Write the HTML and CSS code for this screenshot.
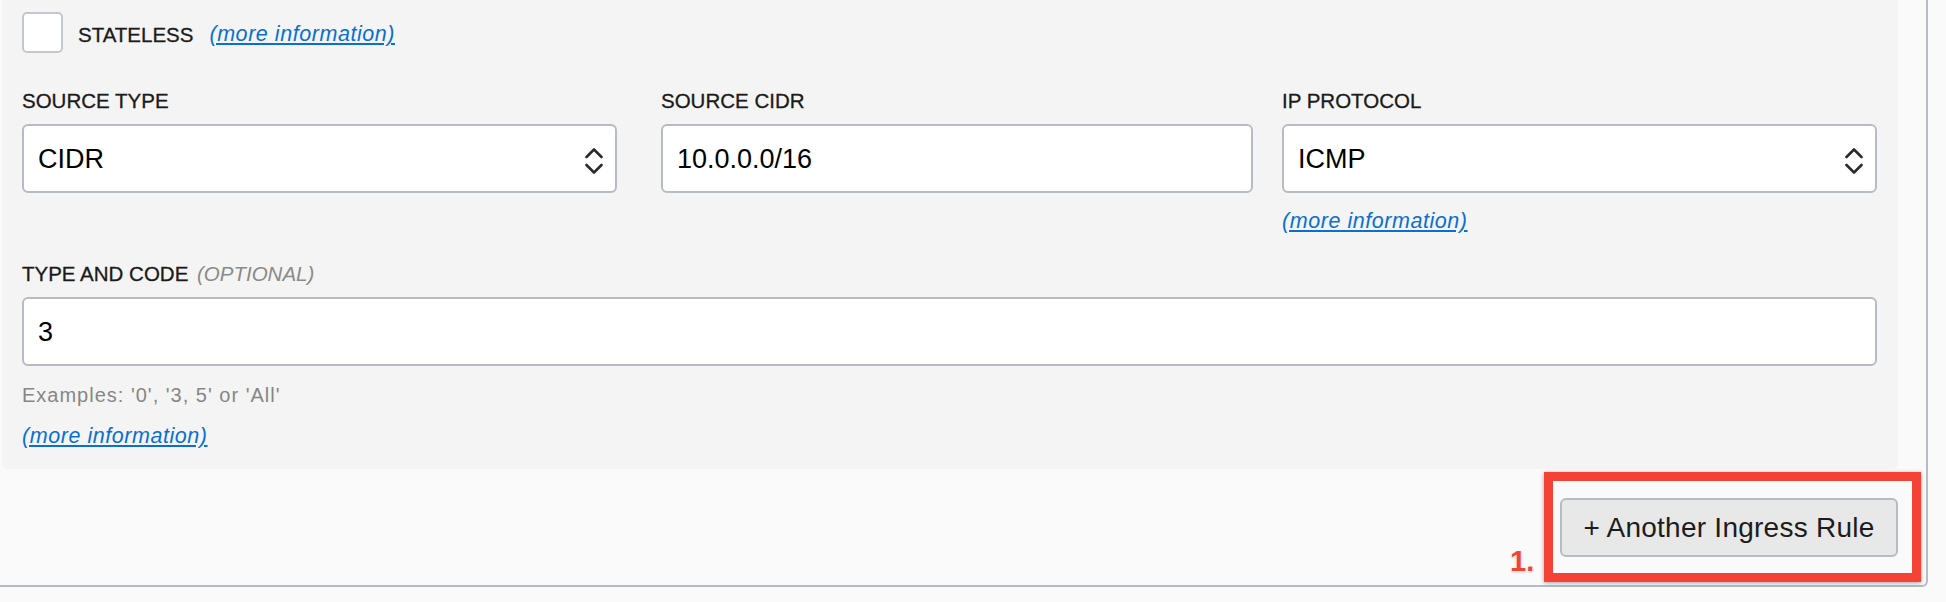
FILE: index.html
```html
<!DOCTYPE html>
<html lang="en">
<head>
<meta charset="utf-8">
<title>Ingress Rule</title>
<link rel="stylesheet" href="styles.css">
</head>
<body>
<div class="card">
  <div class="panel">
    <div class="check-row">
      <span class="checkbox"></span>
      <span class="label check-label">STATELESS</span>
      <a class="more check-more" href="#">(more information)</a>
    </div>

    <div class="fields">
      <div class="field col-type">
        <div class="label">SOURCE TYPE</div>
        <div class="control select">
          <span class="value">CIDR</span>
          <svg class="chevrons" width="18" height="30" viewBox="0 0 18 30"><polyline points="1.5,11 9,3.5 16.5,11" /><polyline points="1.5,19 9,26.5 16.5,19" /></svg>
        </div>
      </div>
      <div class="field col-cidr">
        <div class="label">SOURCE CIDR</div>
        <div class="control">
          <span class="value">10.0.0.0/16</span>
        </div>
      </div>
      <div class="field col-proto">
        <div class="label">IP PROTOCOL</div>
        <div class="control select">
          <span class="value">ICMP</span>
          <svg class="chevrons" width="18" height="30" viewBox="0 0 18 30"><polyline points="1.5,11 9,3.5 16.5,11" /><polyline points="1.5,19 9,26.5 16.5,19" /></svg>
        </div>
        <a class="more field-more" href="#">(more information)</a>
      </div>
    </div>

    <div class="field full">
      <div class="label">TYPE AND CODE <span class="optional">(OPTIONAL)</span></div>
      <div class="control">
        <span class="value">3</span>
      </div>
      <div class="hint">Examples: '0', '3, 5' or 'All'</div>
      <a class="more bottom-more" href="#">(more information)</a>
    </div>
  </div>

  <div class="footer">
    <div class="btn-wrap">
      <button class="btn" type="button">+ Another Ingress Rule</button>
      <span class="annot-box"></span>
      <span class="annot-num">1.</span>
    </div>
  </div>
</div>
</body>
</html>
```

FILE: styles.css
```css
* { box-sizing: border-box; }

html, body {
  margin: 0;
  padding: 0;
  background: #fafafa;
  font-family: "Liberation Sans", Arial, sans-serif;
  color: #1f1f1f;
}

.card {
  width: 1928px;
  background: #fafafa;
  border-right: 2px solid #b6bbc4;
  border-bottom: 2px solid #b6bbc4;
  border-bottom-right-radius: 6px;
  padding: 0 28px 28px 2px;
}

.panel {
  background: #f4f4f4;
  border-radius: 0 0 6px 6px;
  padding: 12px 21px 20px 20px;
}

.check-row {
  display: flex;
  align-items: center;
  height: 41px;
}

.checkbox {
  width: 41px;
  height: 41px;
  background: #fff;
  border: 2px solid #c3c7ce;
  border-radius: 5px;
  flex: none;
}

.label {
  font-size: 20.5px;
  line-height: 24px;
  color: #1a1a1a;
  -webkit-text-stroke: 0.3px #1a1a1a;
  white-space: nowrap;
}

.check-label {
  margin-left: 15px;
  margin-top: 4px;
}

.more {
  font-size: 21.5px;
  line-height: 26px;
  font-style: italic;
  color: #0a6fd0;
  text-decoration: underline;
  text-underline-offset: 2px;
  letter-spacing: 0.55px;
  white-space: nowrap;
}

.check-more {
  margin-left: 16px;
  margin-top: 3px;
}

.fields {
  display: flex;
  align-items: flex-start;
  margin-top: 36px;
}

.field {
  display: flex;
  flex-direction: column;
  align-items: flex-start;
}

.col-type { width: 595px; }
.col-cidr { width: 592px; margin-left: 44px; }
.col-proto { width: 595px; margin-left: 29px; }

.control {
  margin-top: 11px;
  width: 100%;
  height: 69px;
  background: #fff;
  border: 2px solid #b6bbc4;
  border-radius: 6px;
  padding: 0 12px 0 14px;
  display: flex;
  align-items: center;
  justify-content: space-between;
}

.value {
  font-size: 27px;
  color: #000;
  line-height: 32px;
}

.chevrons {
  flex: none;
  fill: none;
  stroke: #2b2b2b;
  stroke-width: 2.6;
  stroke-linecap: round;
  stroke-linejoin: round;
  margin-top: 4px;
}

.field-more {
  margin-top: 15px;
}

.full {
  margin-top: 28px;
  width: 100%;
}

.optional {
  font-style: italic;
  color: #8a8a8a;
  -webkit-text-stroke: 0;
  margin-left: 3px;
}

.hint {
  margin-top: 17px;
  font-size: 20px;
  line-height: 24px;
  letter-spacing: 1px;
  color: #868686;
}

.bottom-more {
  margin-top: 16px;
}

.footer {
  display: flex;
  justify-content: flex-end;
  padding-top: 29px;
}

.btn-wrap {
  position: relative;
  display: flex;
}

.btn {
  width: 338px;
  height: 59px;
  background: #e8e8e8;
  border: 2px solid #b6bbc4;
  border-radius: 6px;
  font-family: "Liberation Sans", Arial, sans-serif;
  font-size: 28px;
  letter-spacing: 0.25px;
  color: #1c1c1c;
  padding: 0;
}

.annot-box {
  position: absolute;
  left: -16px;
  top: -26px;
  width: 377px;
  height: 110px;
  border: 9px solid #f44336;
  box-shadow: 0 1px 4px rgba(0, 0, 0, 0.35);
}

.annot-num {
  position: absolute;
  left: -50px;
  top: 49px;
  font-size: 29px;
  line-height: 29px;
  font-weight: bold;
  color: #f44336;
  text-shadow: 0 0 2px #fff, 0 0 2px #fff, 0 1px 3px rgba(0,0,0,0.25);
}
```
